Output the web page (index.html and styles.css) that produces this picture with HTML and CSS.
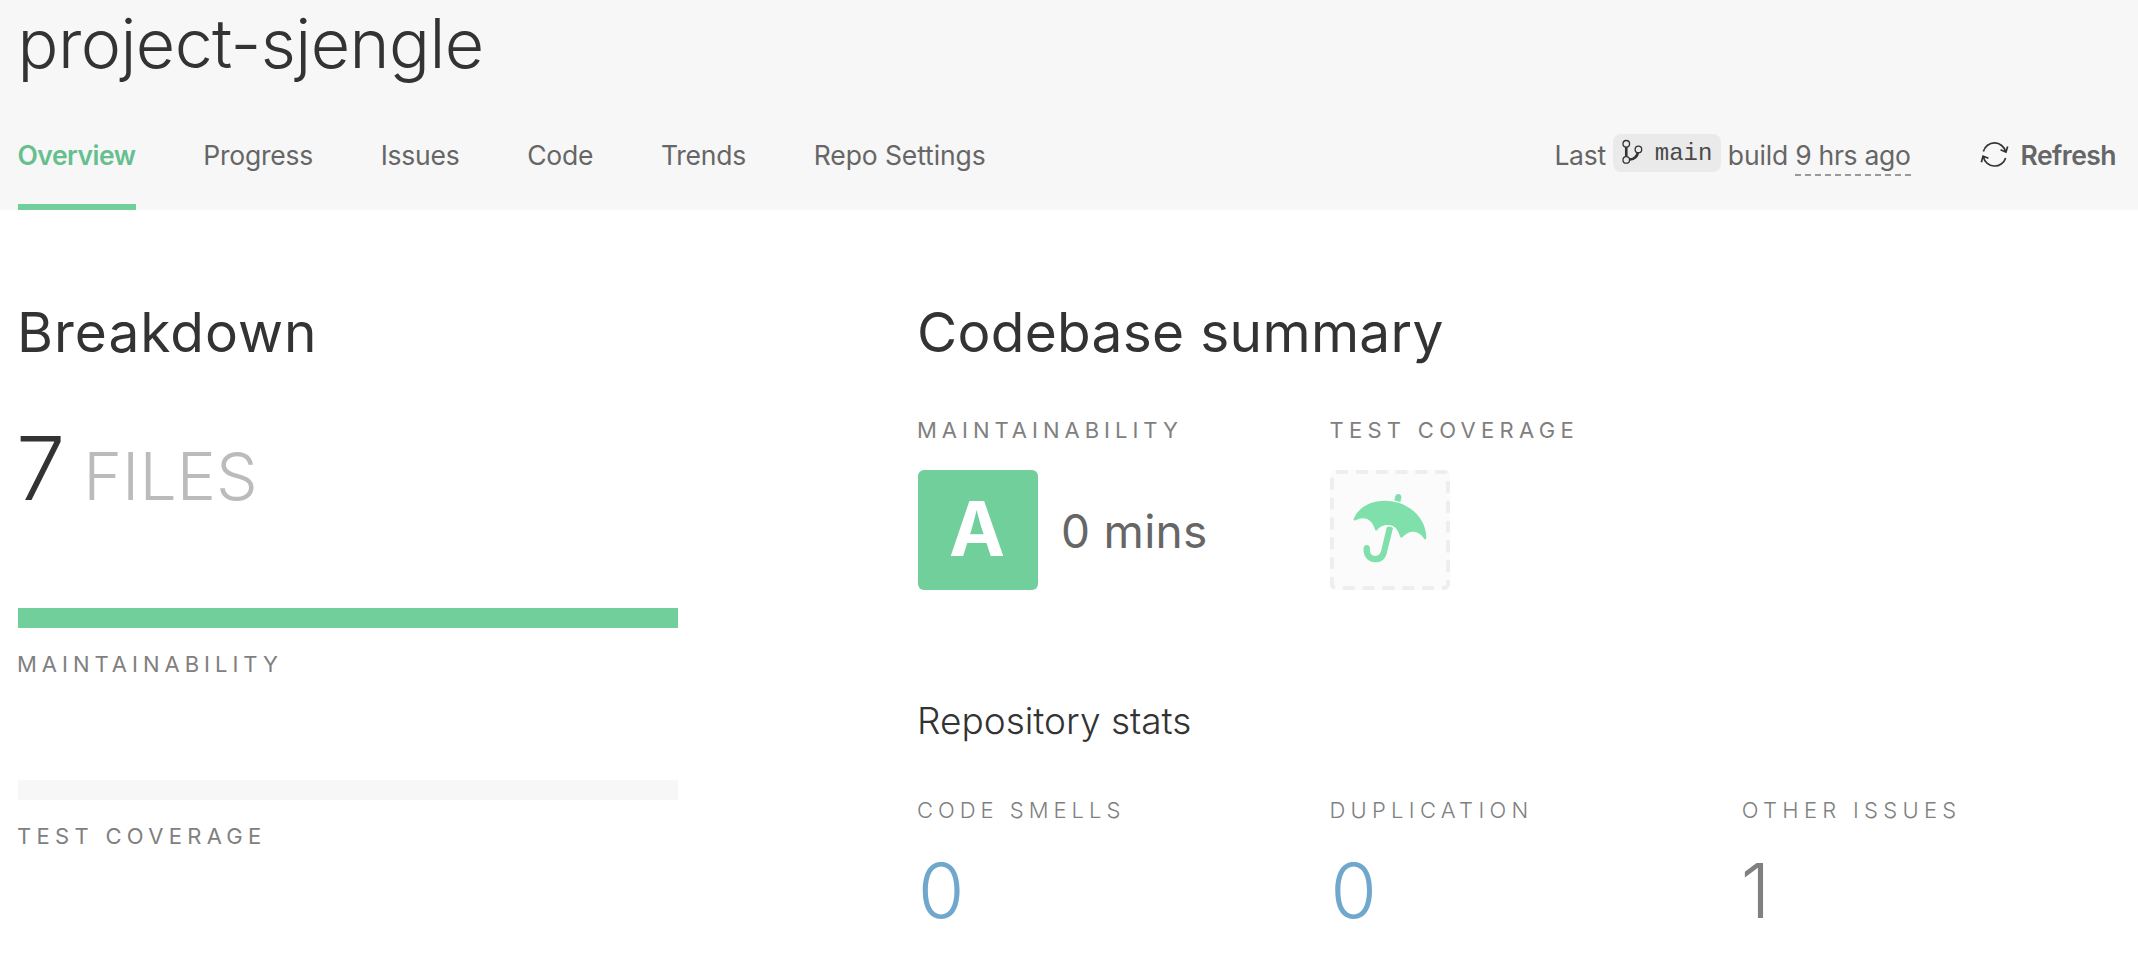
FILE: index.html
```html
<!DOCTYPE html>
<html lang="en">
<head>
<meta charset="utf-8">
<title>project-sjengle</title>
<link rel="stylesheet" href="styles.css">
</head>
<body>
<header class="header">
  <h1 class="title">project-sjengle</h1>
  <div class="bar">
    <nav class="tabs">
      <a class="tab active">Overview</a>
      <a class="tab">Progress</a>
      <a class="tab">Issues</a>
      <a class="tab">Code</a>
      <a class="tab">Trends</a>
      <a class="tab wide">Repo Settings</a>
    </nav>
    <div class="status">
      <span>Last</span>
      <span class="branch">
        <svg class="branch-icon" viewBox="64 42 64 78" fill="none" stroke="#333">
          <path d="M77 66V94" stroke-width="8"/>
          <path d="M113 81C110 98 100 103 88 104" stroke-width="8"/>
          <g stroke-width="4" fill="#eaeaea"><circle cx="77" cy="56" r="10"/><circle cx="114" cy="73" r="10"/><circle cx="77" cy="105" r="10"/></g>
        </svg>
        <code class="branch-name">main</code>
      </span>
      <span class="build">build</span>
      <span class="ago">9 hrs ago</span>
      <svg class="refresh-icon" viewBox="30 30 86 80" fill="none" stroke="#333" stroke-width="5">
        <path d="M40 64A34 34 0 0 1 106 65M91 59L107 66L112 49"/>
        <path d="M106 83A34 34 0 0 1 40 79M34 96L39 78L55 84"/>
      </svg>
      <span class="refresh">Refresh</span>
    </div>
  </div>
</header>
<main class="content">
  <section>
    <h2 class="heading breakdown">Breakdown</h2>
    <div class="files"><span class="files-count">7</span><span class="files-label">FILES</span></div>
    <div class="meter good"></div>
    <div class="label meter-label">MAINTAINABILITY</div>
    <div class="meter empty"></div>
    <div class="label meter-label spaced">TEST COVERAGE</div>
  </section>
  <section>
    <h2 class="heading">Codebase summary</h2>
    <div class="grid ratings">
      <div>
        <div class="label">MAINTAINABILITY</div>
        <div class="rating"><span class="grade">A</span><span class="time">0 mins</span></div>
      </div>
      <div>
        <div class="label spaced">TEST COVERAGE</div>
        <svg class="coverage" viewBox="0 0 120 120">
          <rect width="120" height="120" rx="6" fill="#fbfbfb"/>
          <rect x="2" y="2" width="116" height="116" rx="4" pathLength="460" fill="none" stroke="#eee" stroke-width="4" stroke-dasharray="12 8"/>
          <g transform="scale(.33333) translate(-15 -15)" fill="#7fe0ac">
            <path d="M86 162C98 132 130 107 180 107C250 107 305 160 304 219Q302 225 297 221C280 194 252 194 232 217Q227 221 225 214C217 190 208 181 190 180C174 179 162 187 156 196Q151 200 150 193C142 163 118 151 92 166Q85 168 86 162Z"/>
            <path d="M208 106L211 94C214 83 231 86 229 98L226 111Z"/>
            <path d="M192 185Q198 183 204 189L185 266C179 285 167 292 150 292C128 292 112 272 116 247C119 236 134 238 135 249C133 264 140 273 151 273C161 273 166 267 168 259L185 188Q188 184 192 185Z"/>
          </g>
        </svg>
      </div>
    </div>
    <h3 class="subheading">Repository stats</h3>
    <div class="grid">
      <div><div class="label light smells">CODE SMELLS</div><div class="stat blue">0</div></div>
      <div><div class="label light">DUPLICATION</div><div class="stat blue">0</div></div>
      <div><div class="label light">OTHER ISSUES</div><div class="stat one">1</div></div>
    </div>
  </section>
</main>
</body>
</html>
```

FILE: styles.css
```css
* { box-sizing: border-box; }
body { margin: 0; background: #fff; color: #333; font-family: Inter, "Open Sans", sans-serif; }
h1, h2, h3 { margin: 0; }
svg { display: block; flex: none; }

.header { height: 210px; padding: 3px 22px 0 17.5px; background: #f7f7f7; }
.title { font-size: 68px; font-weight: 300; line-height: 80px; letter-spacing: -0.55px; }
.bar { display: flex; justify-content: space-between; height: 127px; font-size: 26.5px; line-height: 32px; color: #666; }

.tabs { display: flex; gap: 67.8px; letter-spacing: -0.25px; }
.tab { padding-top: 56px; }
.tab.active { color: #66bf8f; font-weight: 600; letter-spacing: -0.5px; border-bottom: 6px solid #71cf9c; }
.tab.wide { letter-spacing: -0.1px; }

.status { display: flex; align-items: flex-start; gap: 7px; padding-top: 56px; letter-spacing: -0.3px; }
.branch { display: flex; align-items: flex-start; width: 108px; height: 38px; margin-top: -5px; padding: 5px 0 0 9px; border-radius: 8px; background: #eaeaea; }
.branch-icon { width: 21px; height: 26px; }
.branch-name { margin-left: 12px; font: 24px/30px "Liberation Mono", monospace; letter-spacing: 0; color: #4a4a4a; }
.build { letter-spacing: -0.1px; }
.ago { padding-bottom: 3px; border-bottom: 2px dashed #999; }
.refresh-icon { width: 29px; height: 27px; margin: 1px 5px 0 62px; }
.refresh { font-weight: 600; letter-spacing: -0.55px; }

.content { display: grid; grid-template-columns: 660px 1fr; column-gap: 240px; padding: 88px 18px 0; }
.heading { margin-left: -1px; font-size: 55px; font-weight: 400; line-height: 68px; letter-spacing: 0.3px; }
.heading.breakdown { letter-spacing: 1px; }

.files { display: flex; align-items: baseline; height: 100px; margin: 52px 0 90px -2px; font-weight: 300; line-height: 100px; }
.files-count { font-size: 88px; }
.files-label { margin-left: 18px; font-size: 66px; color: #bbb; }

.meter { height: 20px; }
.meter.good { background: #71cf9c; }
.meter.empty { margin-top: 102px; background: #f7f7f7; }
.label { margin-left: -1px; font-size: 22px; line-height: 28px; letter-spacing: 5px; color: #808080; }
.label.spaced { letter-spacing: 5.3px; }
.label.light { font-weight: 300; letter-spacing: 5.3px; }
.label.smells { letter-spacing: 5px; }
.meter-label { margin-top: 22px; }

.grid { display: grid; grid-template-columns: repeat(3, 412.4px); }
.ratings { margin-top: 50px; }
.rating { display: flex; align-items: center; gap: 23px; height: 120px; margin-top: 26px; }
.grade { width: 120px; height: 120px; padding-right: 2px; border-radius: 6px; background: #71cf9c; color: #fff; font-size: 75px; font-weight: 700; line-height: 118px; text-align: center; }
.time { padding-top: 1px; font-size: 46px; letter-spacing: 0.3px; color: #666; }
.coverage { width: 120px; height: 120px; margin-top: 26px; }
.subheading { margin: 107px 0 51px -1px; font-size: 37px; font-weight: 300; line-height: 48px; }
.stat { margin-top: 22px; font-size: 75px; font-weight: 300; line-height: 90px; color: #808080; }
.stat.blue { color: #70a7cd; }
.stat.one { margin-left: -2px; }
```
